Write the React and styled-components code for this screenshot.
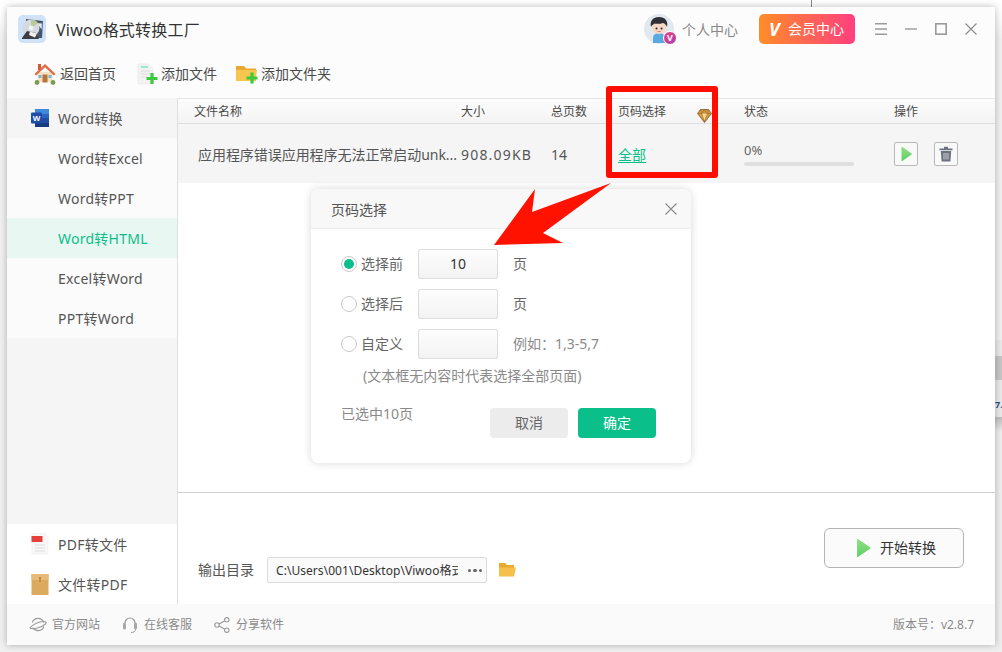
import React from "react";
import styled, { createGlobalStyle } from "styled-components";

const Global = createGlobalStyle`
  html, body { margin: 0; padding: 0; background: #f3f3f3; }
  body { font-family: "Noto Sans", "Noto Sans CJK SC", "Liberation Sans", sans-serif; overflow: hidden; }
  * { box-sizing: border-box; }
`;

const Page = styled.div`
  position: relative;
  width: 1002px;
  height: 652px;
  padding: 7px;
  background: linear-gradient(#ffffff 0, #ffffff 12px, #f0f0f0 40px);
  overflow: hidden;
`;
const BackLine = styled.div`
  position: absolute; left: 811px; top: 0; width: 1px; height: 7px; background: #8a8a8a;
`;
const BackStrip = styled.div`
  position: absolute; left: 995px; top: 340px; width: 7px; height: 312px;
  background: linear-gradient(#e9e9e9 0, #e9e9e9 77px, #bdbdbd 77px, #eeeeee 92px, #eeeeee 100%);
`;
const BackThumb = styled.div`
  position: absolute; left: 0; top: 16px; width: 7px; height: 24px; background: #c6c6c6;
`;
const BackText = styled.span`
  position: absolute; left: 0; top: 58px; font-size: 9px; line-height: 14px; color: #2b4f86; font-weight: 700;
`;
const Window = styled.div`
  position: relative;
  width: 988px;
  height: 638px;
  display: flex;
  flex-direction: column;
  background: #ffffff;
  box-shadow: 0 0 7px rgba(0,0,0,.28);
`;
const TitleBar = styled.header`
  height: 43px;
  display: flex;
  align-items: center;
  padding: 0 18px 0 11px;
  background: #fcfcfc;
`;
const LogoBox = styled.div`
  width: 28px; height: 28px; border-radius: 5px; background: #cfe2f7; display: flex;
  align-items: center; justify-content: center;
`;
const AppTitle = styled.h1`
  margin: 0 0 0 10px; padding-top: 2px; font-size: 16px; letter-spacing: .2px; line-height: 20px; font-weight: 400; color: #333; flex: 1;
`;
const Avatar = styled.div`
  position: relative; width: 30px; height: 30px; border-radius: 50%; background: #e3e8ee;
`;
const AvatarBadge = styled.div`
  position: absolute; right: -3px; bottom: -1px; width: 14px; height: 14px; border-radius: 50%;
  background: linear-gradient(135deg, #ef3f7e, #a83fb0); border: 1px solid #fff;
  color: #fff; font-size: 9px; font-weight: 700; line-height: 12px; text-align: center;
`;
const UserName = styled.span`
  margin: 0 21px 0 8px; padding-top: 2px; font-size: 14px; line-height: 20px; color: #8a8a8a; white-space: nowrap;
`;
const VipButton = styled.button`
  width: 96px; height: 30px; border: 0; border-radius: 5px; padding: 0 0 0 10px;
  display: flex; align-items: center; gap: 0;
  background: linear-gradient(90deg, #ff8d28, #ff3f7f);
  color: #fff; font: inherit; font-size: 14px; line-height: 20px;
`;
const VipMark = styled.span`
  width: 19px; font-size: 18px; font-weight: 700; font-style: italic; line-height: 20px; text-align: left;
`;
const VipLabel = styled.span`
  padding-top: 1px;
`;
const WinControls = styled.div`
  display: flex; align-items: center; margin-left: 20px; gap: 18px;
`;
const Toolbar = styled.nav`
  height: 48px; display: flex; align-items: center; padding: 0 0 0 27px; background: #fcfcfc;
`;
const ToolButton = styled.div`
  display: flex; align-items: center; gap: ${p => p.$gap || 3}px; margin-right: ${p => p.$mr || 0}px;
  font-size: 14px; line-height: 20px; color: #4a4a4a; white-space: nowrap;
`;
const Body = styled.div`
  flex: 1; display: flex; min-height: 0;
`;
const Sidebar = styled.aside`
  width: 171px; display: flex; flex-direction: column; border-right: 1px solid #dfdfdf; background: #f5f5f5;
`;
const SideItem = styled.div`
  height: 40px; display: flex; align-items: center;
  padding-left: ${p => (p.$icon ? 24 : 51)}px; gap: 9px;
  background: ${p => (p.$active ? "#e9f7f2" : p.$head ? "#f5f5f5" : p.$plain ? "#ffffff" : "#fbfbfb")};
  color: ${p => (p.$active ? "#0abf8a" : "#555")};
  font-size: 14px; line-height: 20px; white-space: nowrap;
`;
const SideLabel = styled.span`
  padding-top: 2px; letter-spacing: .25px;
`;
const SideSpacer = styled.div`flex: 1;`;
const Main = styled.main`
  flex: 1; display: flex; flex-direction: column; min-width: 0; background: #fff;
`;
const TableHead = styled.div`
  height: 26px; display: grid; grid-template-columns: 267px 90px 67px 126px 150px 1fr;
  align-items: center; padding-left: 16px;
  border-top: 1px solid #e6e6e6; border-bottom: 1px solid #dedede;
  background: linear-gradient(#fcfcfc, #f4f4f4);
  font-size: 12px; line-height: 24px; color: #4a4a4a;
`;
const HeadCell = styled.div`
  display: flex; height: 24px; align-items: center; padding-top: 1px;
`;
const Gem = styled.span`
  display: flex; margin: 9px 0 0 31px;
`;
const TableRow = styled.div`
  height: 59px; display: grid; grid-template-columns: 267px 90px 67px 126px 150px 1fr;
  align-items: center; padding-left: 16px; background: #f5f5f5;
  font-size: 14px; line-height: 20px; color: #555;
`;
const RowCell = styled.div`
  padding-top: 2px; white-space: nowrap;
  letter-spacing: ${p => p.$spaced ? "1.2px" : "0"};
`;
const FileName = styled.div`
  padding: 2px 0 0 4px; font-size: 14px; white-space: nowrap; overflow: hidden; letter-spacing: -.05px;
`;
const AllLink = styled.a`
  color: #0abf8a; font-size: 14px; text-decoration: underline; text-underline-offset: 2px;
`;
const Progress = styled.div`
  width: 110px; display: flex; flex-direction: column; gap: 4px;
  font-size: 13px; line-height: 16px; color: #666;
`;
const Track = styled.div`
  height: 4px; border-radius: 2px; background: #dfdfdf;
`;
const Ops = styled.div`
  display: flex; gap: 16px;
`;
const OpButton = styled.button`
  width: 24px; height: 24px; padding: 0; border: 1px solid #b9b9b9; border-radius: 2px;
  background: #f9f9f9; display: flex; align-items: center; justify-content: center;
`;
const Spacer = styled.div`flex: 1; background: #fff;`;
const Bottom = styled.div`
  height: 112px; border-top: 1px solid #cfcfcf; display: flex; align-items: flex-start;
  justify-content: space-between; padding: 0 31px 0 20px; background: #fff;
`;
const OutputRow = styled.div`
  display: flex; align-items: center; margin-top: 64px; font-size: 14px; line-height: 20px; color: #555;
`;
const PathField = styled.div`
  width: 220px; height: 26px; margin: 0 11px 0 13px; padding: 1px 4px 0 8px;
  display: flex; align-items: center; justify-content: space-between;
  border: 1px solid #dcdcdc; border-radius: 2px; background: #fafafa;
  font-size: 12px; color: #333; white-space: nowrap;
`;
const PathText = styled.span`
  width: 182px; height: 18px; line-height: 18px; overflow: hidden; display: block; letter-spacing: .05px;
`;
const Dots = styled.span`
  display: flex; gap: 2px; margin-right: 0;
`;
const Dot = styled.i`
  width: 3.5px; height: 3.5px; border-radius: 50%; background: #666; display: block;
`;
const StartButton = styled.button`
  width: 140px; height: 40px; margin-top: 35px; border: 1px solid #b5b5b5; border-radius: 6px;
  background: #fbfbfb; display: flex; align-items: center; padding: 0 0 0 31px; gap: 9px;
  font: inherit; font-size: 14px; line-height: 20px; color: #333;
`;
const Footer = styled.footer`
  height: 41px; display: flex; align-items: center; padding: 0 21px 0 22px; background: #fafafa;
  font-size: 12px; line-height: 16px; color: #8a8a8a;
`;
const FootLink = styled.div`
  display: flex; align-items: center; gap: ${p => p.$gap || 5}px; margin-right: ${p => p.$mr || 0}px; white-space: nowrap;
`;
const Version = styled.div`
  margin-left: auto; white-space: nowrap;
`;
const Dialog = styled.section`
  position: absolute; left: 304px; top: 182px; width: 380px; height: 274px;
  display: flex; flex-direction: column; border-radius: 8px; background: #fff;
  box-shadow: 0 0 8px rgba(0,0,0,.16); overflow: hidden;
`;
const DialogHead = styled.div`
  height: 40px; flex: none; display: flex; align-items: center; justify-content: space-between;
  padding: 0 14px 0 20px; background: #f8f8f8; border-bottom: 1px solid #eeeeee;
  font-size: 14px; line-height: 20px; color: #555;
`;
const DialogTitle = styled.span`
  padding-top: 2px;
`;
const DialogBody = styled.div`
  padding: 20px 35px 0 30px; display: flex; flex-direction: column; gap: 10px;
`;
const OptionRow = styled.div`
  display: grid; grid-template-columns: 20px 57px 80px auto; align-items: center; height: 30px;
  font-size: 14px; line-height: 20px; color: #666;
`;
const Radio = styled.span`
  width: 16px; height: 16px; border-radius: 50%; border: 1px solid #c9c9c9; background: #fff;
  display: flex; align-items: center; justify-content: center;
  &::after { content: ""; width: 10px; height: 10px; border-radius: 50%; background: ${p => (p.$on ? "#0abf8a" : "transparent")}; }
`;
const NumBox = styled.div`
  width: 80px; height: 30px; border: 1px solid #dcdcdc; border-radius: 2px;
  background: linear-gradient(#fdfdfd, #f3f3f3); text-align: center;
  font-size: 14px; line-height: 28px; color: #333;
`;
const Unit = styled.span`
  margin-left: 15px; color: ${p => (p.$muted ? "#8a8a8a" : "#666")}; white-space: nowrap;
  font-size: 14px;
`;
const Hint = styled.div`
  padding: 7px 0 0 22px; margin-top: -10px; font-size: 14px; line-height: 20px; color: #8a8a8a; white-space: nowrap;
`;
const DialogFoot = styled.div`
  display: flex; justify-content: space-between; margin-top: 8px;
  font-size: 14px; line-height: 20px; color: #8a8a8a;
`;
const DialogActions = styled.div`
  display: flex; gap: 10px; margin-top: 4px;
`;
const DialogButton = styled.button`
  width: 78px; height: 30px; border: 0; border-radius: 4px; font: inherit; font-size: 14px; line-height: 20px;
  background: ${p => (p.$primary ? "#0abf8a" : "#ececec")}; color: ${p => (p.$primary ? "#fff" : "#666")};
`;
const RedBox = styled.div`
  position: absolute; left: 599px; top: 79px; width: 112px; height: 92px;
  border: 6px solid #ff0d00; border-radius: 3px;
`;
const ArrowSvg = styled.svg`
  position: absolute; left: 480px; top: 170px;
`;

const Logo = () => (
  <svg width="24" height="24" viewBox="0 0 24 24">
    <path d="M6 2l17 2-1 17H6z" fill="#46566b" />
    <path d="M17 6l5 .6-.4 6z" fill="#dfe6ef" />
    <circle cx="11" cy="11" r="8.500" fill="#d6d9df" />
    <path d="M11 2.500a8.500 8.500 0 0 1 7 3.800l-7 4.700z" fill="#b9c99a" />
    <circle cx="11" cy="11" r="2.400" fill="#f2f3f5" />
    <path d="M2 21l5-7 9 2 3 6H2z" fill="#3d3f45" />
    <path d="M10 14.500l7 2-2 4-6-2.500z" fill="#f0f0f0" />
  </svg>
);
const HomeIcon = () => (
  <svg width="22" height="22" viewBox="0 0 22 22">
    <rect x="4" y="1" width="3" height="6" fill="#d4573a" />
    <rect x="3.500" y="9" width="15" height="10" fill="#f5e2c4" />
    <path d="M11 1L0.500 11l1.600 1.600L11 4.300l8.900 8.300 1.600-1.600z" fill="#e2683f" />
    <rect x="8.500" y="11.500" width="5" height="8" fill="#b5743c" />
    <rect x="4.500" y="12" width="3" height="3" fill="#7fb3d6" />
    <rect x="14.500" y="12" width="3" height="3" fill="#7fb3d6" />
    <circle cx="3" cy="19.500" r="2.400" fill="#7c9a54" />
    <circle cx="19" cy="19.500" r="2.400" fill="#7c9a54" />
  </svg>
);
const FileAddIcon = () => (
  <svg width="22" height="22" viewBox="0 0 22 22">
    <path d="M1 1h10l5 5v15H1z" fill="#f2f2f2" stroke="#e6e6e6" strokeWidth=".6" />
    <path d="M4 4h7" stroke="#66dcc0" strokeWidth="1.200" />
    <path d="M4 8h9M4 11h9M4 14h6" stroke="#dddddd" />
    <path d="M15 10v11M9.500 15.500h11" stroke="#3dc93d" strokeWidth="3.200" />
  </svg>
);
const FolderAddIcon = () => (
  <svg width="22" height="22" viewBox="0 0 22 22">
    <path d="M0 3h8l2 2.500h10V18H0z" fill="#e8a92e" />
    <path d="M0 7h21l-1.500 11H0z" fill="#f6c64f" />
    <path d="M16 9.500v11M10.500 15h11" stroke="#3dc93d" strokeWidth="3.200" />
  </svg>
);
const WordIcon = () => (
  <svg width="18" height="18" viewBox="0 0 18 18">
    <rect x="4" y="0" width="14" height="18" rx="1" fill="#2b65c4" />
    <rect x="4" y="0" width="14" height="5" fill="#3f8ad8" />
    <rect x="4" y="9" width="14" height="5" fill="#1e4ea3" />
    <rect x="4" y="14" width="14" height="4" fill="#163b80" />
    <rect x="0" y="3.500" width="11" height="11" rx="1" fill="#1f4aa6" />
    <text x="5.500" y="12" textAnchor="middle" fontSize="8" fontWeight="700" fill="#fff" fontFamily="Liberation Sans">W</text>
  </svg>
);
const PdfIcon = () => (
  <svg width="18" height="22" viewBox="0 0 18 22">
    <path d="M1 0h12l4 4v17H1z" fill="#f8f8f8" stroke="#ececec" strokeWidth=".7" />
    <rect x="0.500" y="3" width="11" height="6" fill="#e4413a" />
    <path d="M4 12h10M4 15h10M4 18h10" stroke="#dcdcdc" />
  </svg>
);
const PackageIcon = () => (
  <svg width="18" height="21" viewBox="0 0 18 21">
    <rect x=".500" width="17" height="21" fill="#dcaa5f" />
    <rect x=".500" y="0" width="17" height="6" fill="#e6bb78" />
    <circle cx="9" cy="4" r="1" fill="#a9742e" />
    <path d="M9 5v3" stroke="#a9742e" />
  </svg>
);
const MenuIcon = () => (
  <svg width="12" height="12" viewBox="0 0 12 12"><path d="M0 .8h12M0 6h12M0 11.200h12" stroke="#9a9a9a" strokeWidth="1.400" /></svg>
);
const MinIcon = () => (
  <svg width="12" height="12" viewBox="0 0 12 12"><path d="M0 6h12" stroke="#9a9a9a" strokeWidth="1.400" /></svg>
);
const MaxIcon = () => (
  <svg width="12" height="12" viewBox="0 0 12 12"><rect x=".8" y=".8" width="10.400" height="10.400" fill="none" stroke="#9a9a9a" strokeWidth="1.600" /></svg>
);
const CloseIcon = ({ size = 12, color = "#8a8a8a" }) => (
  <svg width={size} height={size} viewBox="0 0 12 12"><path d="M.5.5l11 11M11.500.5l-11 11" stroke={color} strokeWidth="1.100" /></svg>
);
const AvatarArt = () => (
  <svg width="30" height="30" viewBox="0 0 30 30">
    <path d="M9 29v-5c0-3 2.500-5 6-5s6 2 6 5v5z" fill="#5aa9e0" />
    <circle cx="15" cy="13" r="7" fill="#f6d7c3" />
    <path d="M7 13c-1.500-6 2-10 8-10s9.500 4 8 10c-1-2-2-3.500-4-4-2 1-7 1-8.500.5-1 1-3 1.500-3.500 3.500z" fill="#2f2f38" />
    <circle cx="12.500" cy="14.500" r="1" fill="#222" />
    <circle cx="17.500" cy="14.500" r="1" fill="#222" />
    <path d="M13.500 17.500h3" stroke="#d9665e" strokeWidth=".8" />
  </svg>
);
const GemIcon = () => (
  <svg width="15" height="14" viewBox="0 0 15 14">
    <path d="M3.500 0.500h8l3 4-7 9-7-9z" fill="#d99a3a" stroke="#7d5a35" strokeWidth=".8" />
    <path d="M1 4.500h13M5 4.500l2.500 8.500 2.500-8.500M3.500.5L5 4.500 7.500.5 10 4.500 11.500.5" fill="none" stroke="#8a5e28" strokeWidth=".5" />
    <path d="M5 4.500h5l-2.500 7z" fill="#f6d79a" />
  </svg>
);
const PlayIcon = ({ w = 11, h = 14, id = "p" }) => (
  <svg width={w} height={h} viewBox="0 0 11 14">
    <defs>
      <linearGradient id={id} x1="0" y1="0" x2="0" y2="1">
        <stop offset="0" stopColor="#8fdf7f" />
        <stop offset="1" stopColor="#5fcf68" />
      </linearGradient>
    </defs>
    <path d="M.5.500a.6.600 0 0 1 .9-.4l9.200 6.400a.6.600 0 0 1 0 1L1.400 13.900a.6.600 0 0 1-.9-.4z" fill={`url(#${id})`} />
  </svg>
);
const TrashIcon = () => (
  <svg width="14" height="16" viewBox="0 0 14 16">
    <path d="M5 .8h4v1.600h4.500v1.800H.5V2.400H5z" fill="#6c7280" />
    <path d="M1.800 5h10.400l-.8 10.500H2.600z" fill="#6c7280" />
    <path d="M5 7v6.500M7 7v6.500M9 7v6.500" stroke="#e4e4e4" strokeWidth=".8" />
  </svg>
);
const FolderIcon = () => (
  <svg width="18" height="16" viewBox="0 0 18 16">
    <path d="M1 1h6l2 2h7v11H1z" fill="#e8a92e" />
    <path d="M1 5.500h17l-2 9H1z" fill="#f5c04a" />
  </svg>
);
const GlobeIcon = () => (
  <svg width="18" height="16" viewBox="0 0 18 16" fill="none" stroke="#9a9a9a" strokeWidth="1.100">
    <path d="M3.300 5.500a6 6 0 0 1 11.400 0M14.800 9.500a6 6 0 0 1-11 1" />
    <path d="M1 11c1-2 6-5 9-5.800 3-.8 6-1 7 0s-2 3-5 4.500S3 12.500 1 11z" />
  </svg>
);
const HeadsetIcon = () => (
  <svg width="16" height="18" viewBox="0 0 16 18" fill="none">
    <path d="M3 7a5 5 0 0 1 10 0" stroke="#9a9a9a" strokeWidth="1.200" />
    <rect x="1" y="6.500" width="3" height="7" rx="1.500" fill="#a8a8a8" />
    <rect x="12" y="6.500" width="3" height="7" rx="1.500" fill="#a8a8a8" />
    <path d="M13.500 13.500c0 2-2 3-4.500 3" stroke="#9a9a9a" />
  </svg>
);
const ShareIcon = () => (
  <svg width="16" height="16" viewBox="0 0 16 16" fill="none" stroke="#9a9a9a" strokeWidth="1.100">
    <circle cx="3" cy="8" r="2.200" /><circle cx="12.800" cy="2.800" r="2.200" /><circle cx="12.800" cy="13.200" r="2.200" />
    <path d="M5 7l5.900-3.200M5 9l5.900 3.200" />
  </svg>
);

export default function App() {
  return (
    <Page>
      <Global />
      <BackLine />
      <BackStrip><BackThumb /><BackText>7.</BackText></BackStrip>
      <Window>
        <TitleBar>
          <LogoBox><Logo /></LogoBox>
          <AppTitle>Viwoo格式转换工厂</AppTitle>
          <Avatar><AvatarArt /><AvatarBadge>V</AvatarBadge></Avatar>
          <UserName>个人中心</UserName>
          <VipButton><VipMark>V</VipMark><VipLabel>会员中心</VipLabel></VipButton>
          <WinControls>
            <MenuIcon /><MinIcon /><MaxIcon /><CloseIcon />
          </WinControls>
        </TitleBar>
        <Toolbar>
          <ToolButton $gap={4} $mr={21}><HomeIcon />返回首页</ToolButton>
          <ToolButton $gap={2} $mr={19}><FileAddIcon />添加文件</ToolButton>
          <ToolButton $gap={3}><FolderAddIcon />添加文件夹</ToolButton>
        </Toolbar>
        <Body>
          <Sidebar>
            <SideItem $icon $head><WordIcon /><SideLabel>Word转换</SideLabel></SideItem>
            <SideItem><SideLabel>Word转Excel</SideLabel></SideItem>
            <SideItem><SideLabel>Word转PPT</SideLabel></SideItem>
            <SideItem $active><SideLabel>Word转HTML</SideLabel></SideItem>
            <SideItem><SideLabel>Excel转Word</SideLabel></SideItem>
            <SideItem><SideLabel>PPT转Word</SideLabel></SideItem>
            <SideSpacer />
            <SideItem $icon $plain><PdfIcon /><SideLabel>PDF转文件</SideLabel></SideItem>
            <SideItem $icon $plain><PackageIcon /><SideLabel>文件转PDF</SideLabel></SideItem>
          </Sidebar>
          <Main>
            <TableHead>
              <HeadCell>文件名称</HeadCell>
              <HeadCell>大小</HeadCell>
              <HeadCell>总页数</HeadCell>
              <HeadCell>页码选择<Gem><GemIcon /></Gem></HeadCell>
              <HeadCell>状态</HeadCell>
              <HeadCell>操作</HeadCell>
            </TableHead>
            <TableRow>
              <FileName>应用程序错误应用程序无法正常启动unk...</FileName>
              <RowCell $spaced>908.09KB</RowCell>
              <RowCell>14</RowCell>
              <RowCell><AllLink>全部</AllLink></RowCell>
              <Progress>0%<Track /></Progress>
              <Ops>
                <OpButton><PlayIcon id="rowplay" /></OpButton>
                <OpButton><TrashIcon /></OpButton>
              </Ops>
            </TableRow>
            <Spacer />
            <Bottom>
              <OutputRow>
                输出目录
                <PathField><PathText>C:\Users\001\Desktop\Viwoo格式</PathText><Dots><Dot /><Dot /><Dot /></Dots></PathField>
                <FolderIcon />
              </OutputRow>
              <StartButton><PlayIcon w={15} h={18} id="startplay" />开始转换</StartButton>
            </Bottom>
          </Main>
        </Body>
        <Footer>
          <FootLink $mr={22}><GlobeIcon />官方网站</FootLink>
          <FootLink $mr={22} $gap={6}><HeadsetIcon />在线客服</FootLink>
          <FootLink $gap={6}><ShareIcon />分享软件</FootLink>
          <Version>版本号：v2.8.7</Version>
        </Footer>
        <Dialog>
          <DialogHead><DialogTitle>页码选择</DialogTitle><CloseIcon /></DialogHead>
          <DialogBody>
            <OptionRow><Radio $on /><span>选择前</span><NumBox>10</NumBox><Unit>页</Unit></OptionRow>
            <OptionRow><Radio /><span>选择后</span><NumBox /><Unit>页</Unit></OptionRow>
            <OptionRow><Radio /><span>自定义</span><NumBox /><Unit $muted>例如：1,3-5,7</Unit></OptionRow>
            <Hint>(文本框无内容时代表选择全部页面)</Hint>
            <DialogFoot>
              <span>已选中10页</span>
              <DialogActions>
                <DialogButton>取消</DialogButton>
                <DialogButton $primary>确定</DialogButton>
              </DialogActions>
            </DialogFoot>
          </DialogBody>
        </Dialog>
        <RedBox />
        <ArrowSvg width="130" height="70" viewBox="0 0 130 70">
          <path d="M7 68L48 12 45 35 124 6 56 56 76 66z" fill="#ff1200" />
        </ArrowSvg>
      </Window>
    </Page>
  );
}
